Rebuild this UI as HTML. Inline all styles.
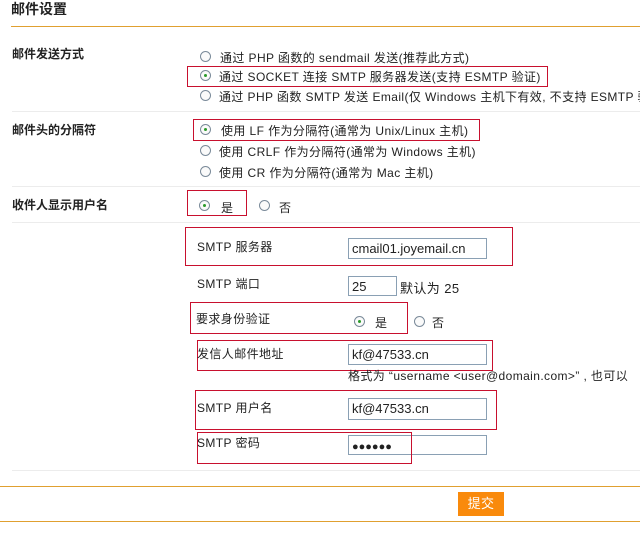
<!DOCTYPE html>
<html><head><meta charset="utf-8"><style>
body{margin:0;width:640px;height:534px;background:#fff;position:relative;overflow:hidden;font-family:"Liberation Sans","Noto Sans CJK SC",sans-serif;font-size:12px;color:#222;letter-spacing:0.4px}
.a{position:absolute;white-space:nowrap}
.b{font-weight:bold;letter-spacing:0}
.rb{position:absolute;border:1px solid #c8102e}
.hl{position:absolute;height:1px;background:#ececec}
.r{position:absolute;width:11px;height:11px;border:1px solid #7a8a99;border-radius:50%;background:#fafafa;box-sizing:border-box}
.r.on::after{content:"";position:absolute;left:3px;top:3px;width:3px;height:3px;border-radius:50%;background:#2a9a2a}
.in{position:absolute;border:1px solid #8aa0b4;box-sizing:border-box;background:#fff;font-size:13px;padding-left:3px;line-height:19px;letter-spacing:0}
</style></head><body>
<div class="a b" style="left:11px;top:-1px;font-size:14px">邮件设置</div>
<div class="a" style="left:11px;top:26px;width:629px;height:1px;background:#e0a030"></div>

<div class="a b" style="left:12px;top:45px">邮件发送方式</div>
<div class="r" style="left:200px;top:51px"></div><div class="a" style="left:220px;top:49px">通过 PHP 函数的 sendmail 发送(推荐此方式)</div>
<div class="rb" style="left:187px;top:66px;width:359px;height:19px"></div>
<div class="r on" style="left:200px;top:70px"></div><div class="a" style="left:219px;top:68px">通过 SOCKET 连接 SMTP 服务器发送(支持 ESMTP 验证)</div>
<div class="r" style="left:200px;top:90px"></div><div class="a" style="left:219px;top:88px">通过 PHP 函数 SMTP 发送 Email(仅 Windows 主机下有效, 不支持 ESMTP 验证)</div>
<div class="hl" style="left:12px;top:111px;width:628px"></div>

<div class="a b" style="left:12px;top:121px">邮件头的分隔符</div>
<div class="rb" style="left:193px;top:119px;width:285px;height:20px"></div>
<div class="r on" style="left:200px;top:124px"></div><div class="a" style="left:221px;top:122px">使用 LF 作为分隔符(通常为 Unix/Linux 主机)</div>
<div class="r" style="left:200px;top:145px"></div><div class="a" style="left:219px;top:143px">使用 CRLF 作为分隔符(通常为 Windows 主机)</div>
<div class="r" style="left:200px;top:166px"></div><div class="a" style="left:219px;top:164px">使用 CR 作为分隔符(通常为 Mac 主机)</div>
<div class="hl" style="left:12px;top:186px;width:628px"></div>

<div class="a b" style="left:12px;top:196px">收件人显示用户名</div>
<div class="rb" style="left:187px;top:190px;width:58px;height:24px"></div>
<div class="r on" style="left:199px;top:200px"></div><div class="a" style="left:221px;top:199px">是</div>
<div class="r" style="left:259px;top:200px"></div><div class="a" style="left:279px;top:199px">否</div>
<div class="hl" style="left:12px;top:222px;width:628px"></div>

<div class="rb" style="left:185px;top:227px;width:326px;height:37px"></div>
<div class="a" style="left:197px;top:238px">SMTP 服务器</div>
<div class="in" style="left:348px;top:238px;width:139px;height:21px">cmail01.joyemail.cn</div>

<div class="a" style="left:197px;top:275px">SMTP 端口</div>
<div class="in" style="left:348px;top:276px;width:49px;height:20px">25</div>
<div class="a" style="left:400px;top:278px;font-size:13px">默认为 25</div>

<div class="rb" style="left:190px;top:302px;width:216px;height:30px"></div>
<div class="a" style="left:196px;top:310px">要求身份验证</div>
<div class="r on" style="left:354px;top:316px"></div><div class="a" style="left:375px;top:314px">是</div>
<div class="r" style="left:414px;top:316px"></div><div class="a" style="left:432px;top:314px">否</div>

<div class="rb" style="left:197px;top:340px;width:294px;height:29px"></div>
<div class="a" style="left:197px;top:345px">发信人邮件地址</div>
<div class="in" style="left:348px;top:344px;width:139px;height:21px">kf@47533.cn</div>
<div class="a" style="left:348px;top:367px">格式为 “username &lt;user@domain.com&gt;” , 也可以</div>

<div class="rb" style="left:195px;top:390px;width:300px;height:38px"></div>
<div class="a" style="left:197px;top:399px">SMTP 用户名</div>
<div class="in" style="left:348px;top:398px;width:139px;height:22px">kf@47533.cn</div>

<div class="in" style="left:348px;top:435px;width:139px;height:20px;font-size:11px;font-weight:bold;line-height:22px">●●●●●●</div>
<div class="rb" style="left:197px;top:432px;width:213px;height:30px"></div>
<div class="a" style="left:197px;top:434px">SMTP 密码</div>
<div class="hl" style="left:12px;top:470px;width:628px"></div>

<div class="a" style="left:0;top:486px;width:640px;height:1px;background:#e0a030"></div>
<div class="a" style="left:458px;top:492px;width:46px;height:24px;background:#f98a0c;color:#fff;text-align:center;line-height:23px;font-size:13px">提交</div>
<div class="a" style="left:0;top:521px;width:640px;height:1px;background:#e0a030"></div>
</body></html>
